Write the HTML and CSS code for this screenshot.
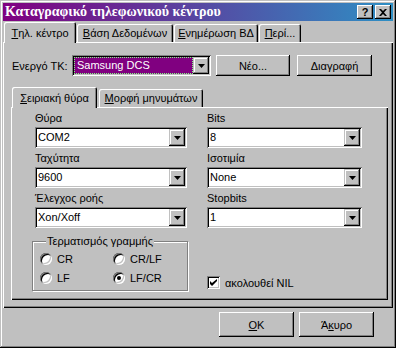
FILE: index.html
```html
<!DOCTYPE html>
<html lang="el">
<head>
  <meta charset="UTF-8" />
  <title>Καταγραφικό τηλεφωνικού κέντρου</title>
  <link rel="stylesheet" href="styles.css">
</head>
<body>
  <div class="ventana">
    <div class="titulo">
      <span class="titulo-texto">Καταγραφικό τηλεφωνικού κέντρου</span>
      <span class="tbtn">?</span>
      <span class="tbtn">
        <svg width="8" height="7" viewBox="0 0 8 7"><path d="M0 0h2l2 2 2-2h2L5 3.5 8 7H6L4 5 2 7H0l3-3.5z" fill="#000"/></svg>
      </span>
    </div>

    <div class="pestanas">
      <div class="pestana activa" style="width:72px"><u>Τ</u>ηλ. κέντρο</div>
      <div class="pestana" style="width:96px"><u>Β</u>άση Δεδομένων</div>
      <div class="pestana" style="width:84px"><u>Ε</u>νημέρωση ΒΔ</div>
      <div class="pestana" style="width:42px"><u>Π</u>ερί...</div>
    </div>

    <div class="panel">
      <div class="fila-tk">
        <span class="etiqueta-tk">Ενεργό ΤΚ:</span>
        <div class="combo combo-tk">
          <span class="valor seleccion"><span class="foco">Samsung DCS</span></span>
          <span class="flecha"><svg width="7" height="4" viewBox="0 0 7 4"><path d="M0 0h7L3.5 4z" fill="#000"/></svg></span>
        </div>
        <button class="boton boton-nuevo">Νέο...</button>
        <button class="boton boton-borrar">Διαγραφή</button>
      </div>

      <div class="pestanas interior">
        <div class="pestana activa" style="width:85px"><u>Σ</u>ειριακή θύρα</div>
        <div class="pestana" style="width:104px"><u>Μ</u>ορφή μηνυμάτων</div>
      </div>

      <div class="panel panel-interior">
        <div class="campos">
          <div class="campo">
            <label>Θύρα</label>
            <div class="combo">
              <span class="valor">COM2</span>
              <span class="flecha"><svg width="7" height="4" viewBox="0 0 7 4"><path d="M0 0h7L3.5 4z" fill="#000"/></svg></span>
            </div>
          </div>
          <div class="campo">
            <label>Bits</label>
            <div class="combo">
              <span class="valor">8</span>
              <span class="flecha"><svg width="7" height="4" viewBox="0 0 7 4"><path d="M0 0h7L3.5 4z" fill="#000"/></svg></span>
            </div>
          </div>
          <div class="campo">
            <label>Ταχύτητα</label>
            <div class="combo">
              <span class="valor">9600</span>
              <span class="flecha"><svg width="7" height="4" viewBox="0 0 7 4"><path d="M0 0h7L3.5 4z" fill="#000"/></svg></span>
            </div>
          </div>
          <div class="campo">
            <label>Ισοτιμία</label>
            <div class="combo">
              <span class="valor">None</span>
              <span class="flecha"><svg width="7" height="4" viewBox="0 0 7 4"><path d="M0 0h7L3.5 4z" fill="#000"/></svg></span>
            </div>
          </div>
          <div class="campo">
            <label>Έλεγχος ροής</label>
            <div class="combo">
              <span class="valor">Xon/Xoff</span>
              <span class="flecha"><svg width="7" height="4" viewBox="0 0 7 4"><path d="M0 0h7L3.5 4z" fill="#000"/></svg></span>
            </div>
          </div>
          <div class="campo">
            <label>Stopbits</label>
            <div class="combo">
              <span class="valor">1</span>
              <span class="flecha"><svg width="7" height="4" viewBox="0 0 7 4"><path d="M0 0h7L3.5 4z" fill="#000"/></svg></span>
            </div>
          </div>

          <fieldset class="grupo">
            <legend>Τερματισμός γραμμής</legend>
            <div class="radios">
              <div class="opcion"><span class="radio"></span>CR</div>
              <div class="opcion"><span class="radio"></span>CR/LF</div>
              <div class="opcion"><span class="radio"></span>LF</div>
              <div class="opcion"><span class="radio marcado"></span>LF/CR</div>
            </div>
          </fieldset>

          <div class="opcion casilla-fila">
            <span class="casilla">
              <svg width="7" height="7" viewBox="0 0 7 7"><path d="M0 2v3l2 2 5-5V-0L2 4z" fill="#000"/></svg>
            </span>
            ακολουθεί NIL
          </div>
        </div>
      </div>
    </div>

    <div class="pie">
      <button class="boton"><u>Ο</u>Κ</button>
      <button class="boton">Ά<u>κ</u>υρο</button>
    </div>
  </div>
</body>
</html>
```

FILE: styles.css
```css
* {
  margin: 0;
  padding: 0;
  box-sizing: border-box;
}
body {
  background: #c0c0c0;
  font-family: "Liberation Sans", Arial, sans-serif;
  font-size: 11px;
  color: #000;
}
.ventana {
  width: 396px;
  height: 348px;
  padding: 3px;
  background: #c0c0c0;
  box-shadow: inset -1px -1px #000, inset 1px 1px #c0c0c0, inset -2px -2px #808080, inset 2px 2px #fff;
}
.titulo {
  height: 18px;
  display: flex;
  align-items: center;
  padding: 0 2px 0 2px;
  background: linear-gradient(to right, #800080, #2e8fc4);
  color: #fff;
}
.titulo-texto {
  flex: 1;
  font-family: "Liberation Serif", serif;
  font-weight: bold;
  font-size: 14px;
  white-space: nowrap;
}
.tbtn {
  width: 16px;
  height: 14px;
  margin-left: 2px;
  display: flex;
  align-items: center;
  justify-content: center;
  background: #c0c0c0;
  color: #000;
  font-weight: bold;
  font-size: 11px;
  box-shadow: inset -1px -1px #000, inset 1px 1px #fff, inset -2px -2px #808080;
}
.pestanas {
  display: flex;
  height: 21px;
  gap: 1px;
  padding-left: 1px;
  align-items: flex-start;
}
.pestana {
  height: 18px;
  margin-top: 3px;
  display: flex;
  align-items: center;
  justify-content: center;
  white-space: nowrap;
  background: #c0c0c0;
  border-radius: 2px 2px 0 0;
  box-shadow: inset 1px 1px #fff, inset -1px 0 #000, inset -2px 0 #808080;
}
.pestana.activa {
  height: 21px;
  margin-top: 1px;
  position: relative;
  z-index: 1;
}
.panel {
  height: 266px;
  padding: 13px 5px 0 8px;
  box-shadow: inset 1px 1px #fff, inset -1px -1px #000, inset -2px -2px #808080;
}
.fila-tk {
  display: flex;
  align-items: center;
  height: 21px;
  padding-left: 1px;
}
.etiqueta-tk {
  width: 60px;
}
.combo {
  display: flex;
  height: 21px;
  padding: 2px;
  background: #fff;
  box-shadow: inset 1px 1px #808080, inset -1px -1px #fff, inset 2px 2px #000, inset -2px -2px #c0c0c0;
}
.combo-tk {
  width: 139px;
  margin-right: 5px;
}
.valor {
  flex: 1;
  line-height: 17px;
  padding-left: 1px;
  white-space: nowrap;
}
.seleccion {
  background: #800080;
  color: #fff;
  padding: 0;
  display: flex;
}
.foco {
  flex: 1;
  padding-left: 2px;
  line-height: 15px;
  margin: 1px;
  outline: 1px dotted #7fff7f;
}
.flecha {
  width: 16px;
  height: 17px;
  display: flex;
  align-items: center;
  justify-content: center;
  background: #c0c0c0;
  box-shadow: inset -1px -1px #000, inset 1px 1px #c0c0c0, inset -2px -2px #808080, inset 2px 2px #fff;
}
.boton {
  font: inherit;
  color: #000;
  border: none;
  background: #c0c0c0;
  width: 75px;
  height: 21px;
  box-shadow: inset -1px -1px #000, inset 1px 1px #fff, inset -2px -2px #808080;
}
.boton-nuevo {
  width: 74px;
  margin-right: 7px;
}
.pestanas.interior {
  margin-top: 11px;
  height: 20px;
  gap: 2px;
}
.pestanas.interior .pestana {
  margin-top: 2px;
}
.pestanas.interior .pestana.activa {
  margin-top: 0;
}
.panel-interior {
  height: 193px;
  padding: 4px 0 0 24px;
}
.campos {
  display: grid;
  grid-template-columns: 152px 155px;
  column-gap: 20px;
  row-gap: 3px;
}
.campo label {
  display: block;
  line-height: 14px;
  margin-bottom: 2px;
}
.grupo {
  margin: 4px 0 0 -3px;
  width: 156px;
  border: 1px solid #808080;
  box-shadow: inset 1px 1px #fff, 1px 1px #fff;
  padding: 1px 0 3px 7px;
}
.grupo legend {
  margin-left: 6px;
  padding: 0 1px;
  line-height: 13px;
  background: #c0c0c0;
}
.radios {
  display: grid;
  grid-template-columns: 73px auto;
}
.opcion {
  display: flex;
  align-items: center;
  height: 19px;
}
.radio {
  width: 12px;
  height: 12px;
  margin-right: 5px;
  border-radius: 50%;
  background: #fff;
  display: flex;
  align-items: center;
  justify-content: center;
  box-shadow: inset 1px 1px #808080, inset -1px -1px #fff, inset 2px 2px #000, inset -2px -2px #c0c0c0;
}
.radio.marcado::after {
  content: "";
  width: 4px;
  height: 4px;
  border-radius: 50%;
  background: #000;
}
.casilla-fila {
  align-self: end;
  margin-bottom: 2px;
  height: 13px;
}
.casilla {
  width: 13px;
  height: 13px;
  margin-right: 5px;
  background: #fff;
  display: flex;
  align-items: center;
  justify-content: center;
  box-shadow: inset 1px 1px #808080, inset -1px -1px #fff, inset 2px 2px #000, inset -2px -2px #c0c0c0;
}
.pie {
  display: flex;
  justify-content: flex-end;
  gap: 5px;
  padding: 4px 19px 0 0;
}
.pie .boton {
  height: 25px;
}
```
